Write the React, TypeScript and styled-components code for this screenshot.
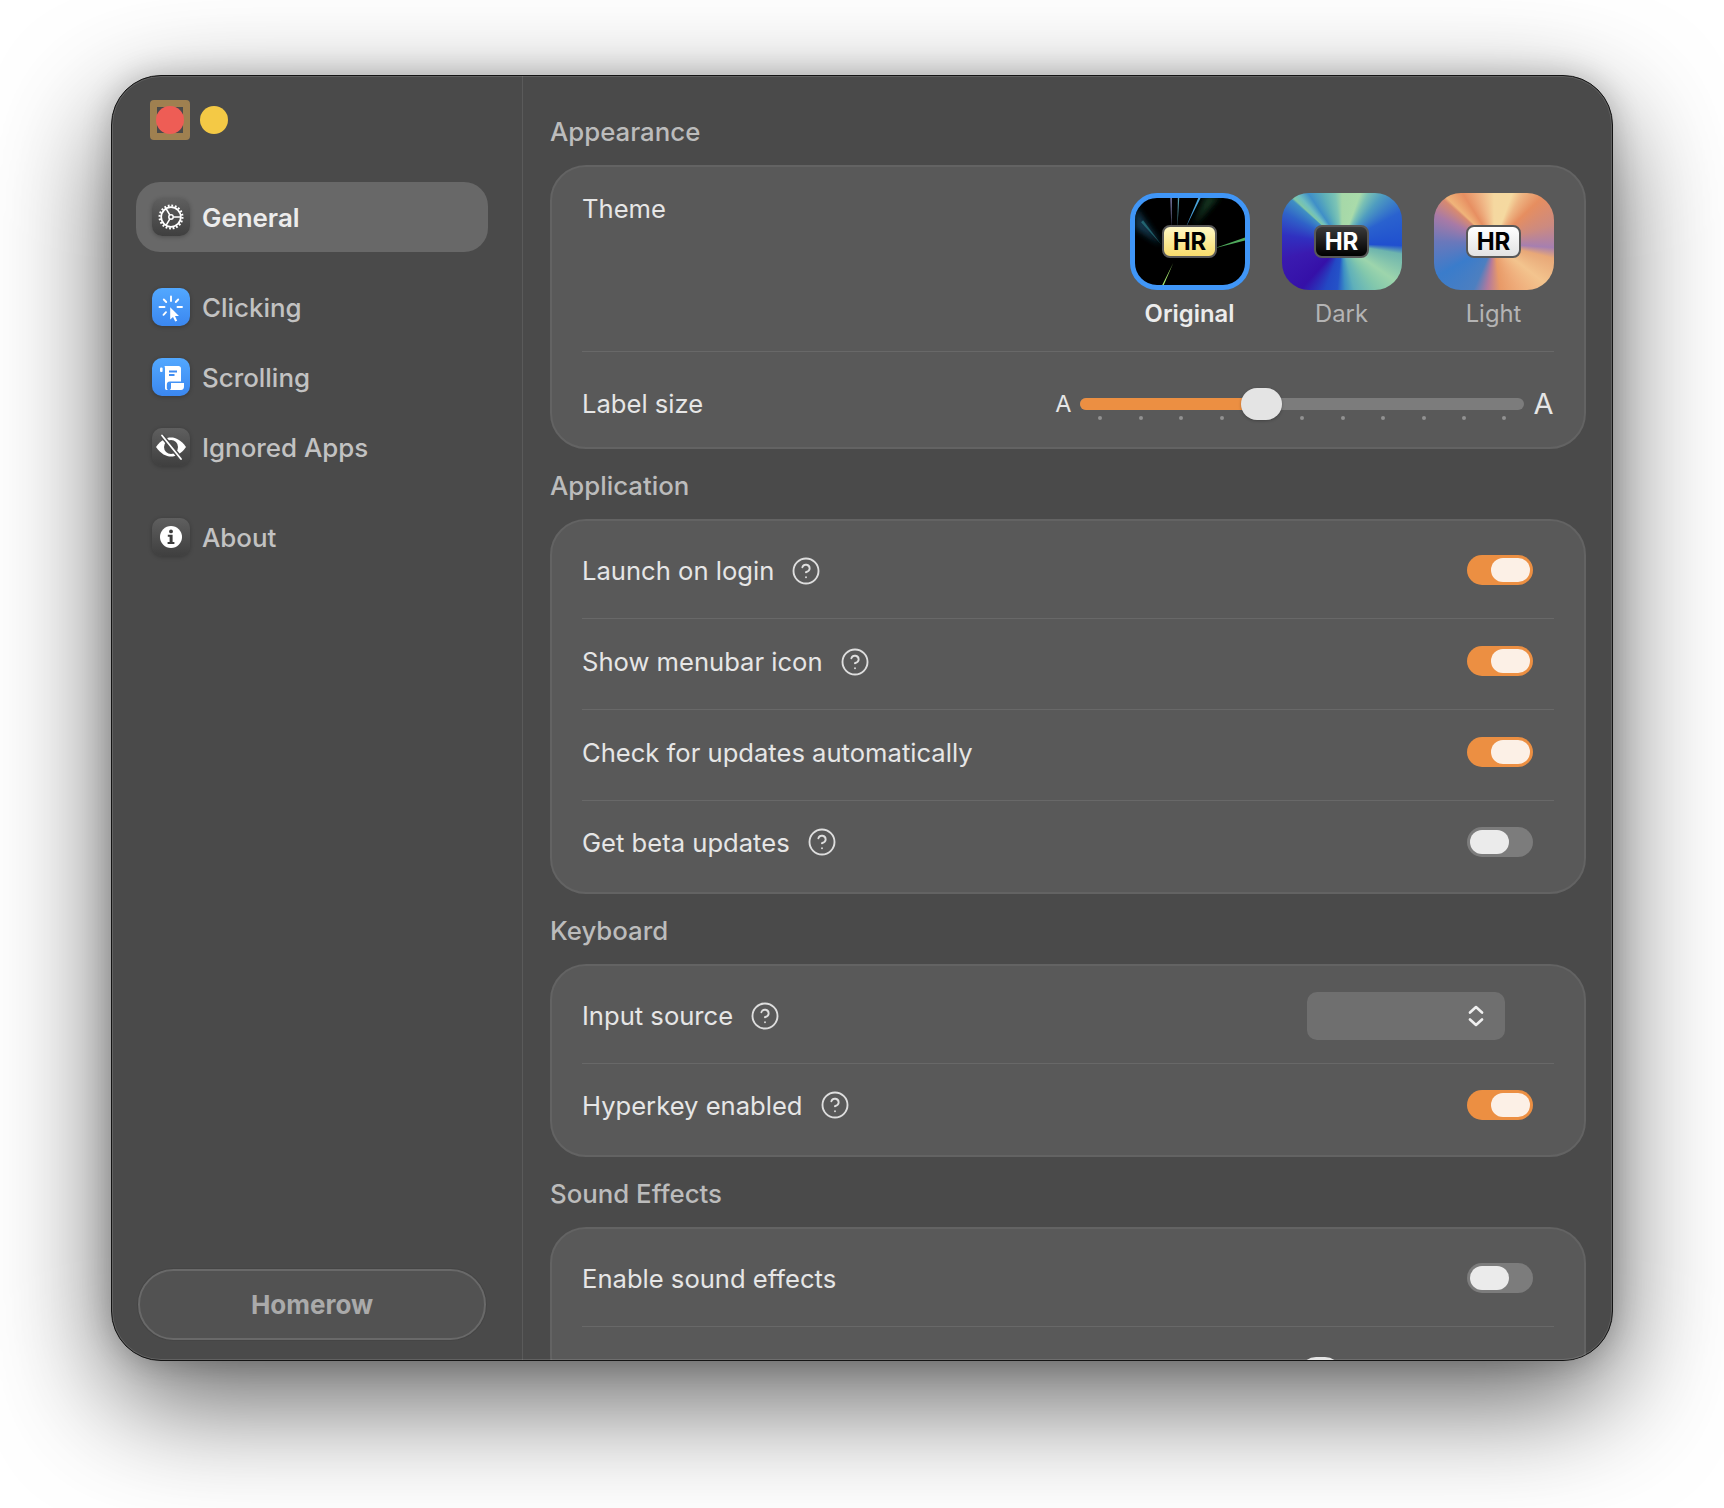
import React from "react";
import styled, { createGlobalStyle } from "styled-components";
import { CircleHelp } from "lucide-react";

const Global = createGlobalStyle`
  html, body { margin: 0; padding: 0; background: #fff; overflow: hidden; }
  body { font-family: Inter, "Liberation Sans", sans-serif; -webkit-font-smoothing: antialiased; }
`;

const Page = styled.div`
  width: 1724px;
  height: 1508px;
  box-sizing: border-box;
  padding: 75px 0 0 111px;
  background: #fff;
`;

const Window = styled.div`
  position: relative;
  width: 1502px;
  height: 1286px;
  box-sizing: border-box;
  display: flex;
  border: 1px solid #141414;
  border-radius: 50px;
  background: #4a4a4a;
  overflow: hidden;
  box-shadow: 0 40px 115px rgba(0, 0, 0, 0.62), 0 0 30px rgba(0, 0, 0, 0.2);
  &::after {
    content: "";
    position: absolute;
    inset: 0;
    border-radius: 49px;
    border: 1.5px solid rgba(255, 255, 255, 0.13);
    pointer-events: none;
  }
`;

const Sidebar = styled.aside`
  width: 411px;
  flex: none;
  box-sizing: border-box;
  padding: 24px 24px 20px;
  display: flex;
  flex-direction: column;
  border-right: 1.5px solid #5a5a5a;
`;

const Traffic = styled.div`
  display: flex;
  align-items: center;
  gap: 10px;
  padding-left: 14px;
  height: 40px;
  margin-bottom: 42px;
`;

const Highlight = styled.div`
  width: 40px;
  height: 40px;
  box-sizing: border-box;
  border: 7px solid #9f8050;
  border-radius: 4px;
  display: flex;
  align-items: center;
  justify-content: center;
`;

const Dot = styled.span<{ $color: string }>`
  width: 28px;
  height: 28px;
  flex: none;
  border-radius: 50%;
  background: ${(p) => p.$color};
`;

const Nav = styled.nav`
  display: flex;
  flex-direction: column;
  width: 352px;
`;

const NavItem = styled.div<{ $active?: boolean; $spaced?: boolean }>`
  height: 70px;
  box-sizing: border-box;
  padding-left: 16px;
  display: flex;
  align-items: center;
  gap: 12px;
  border-radius: 24px;
  margin-top: ${(p) => (p.$spaced ? "20px" : "0")};
  background: ${(p) => (p.$active ? "#686868" : "transparent")};
  color: ${(p) => (p.$active ? "#ececec" : "#c2c2c2")};
  font-size: 25.9px;
  font-weight: ${(p) => (p.$active ? 600 : 500)};
`;

const IconTile = styled.span<{ $blue?: boolean }>`
  width: 38px;
  height: 38px;
  flex: none;
  border-radius: 10px;
  background: ${(p) =>
    p.$blue ? "linear-gradient(#52a8ff, #3b87f0)" : "linear-gradient(#5f5f5f, #3f3f3f)"};
  box-shadow: 0 1px 4px rgba(0, 0, 0, 0.25);
  display: flex;
  svg { display: block; }
`;

const Homerow = styled.div`
  margin: auto 2px 0;
  height: 71px;
  width: 348px;
  box-sizing: border-box;
  border-radius: 36px;
  background: #525252;
  border: 2px solid #696969;
  box-shadow: 0 0 0 1px #454545;
  display: flex;
  align-items: center;
  justify-content: center;
  color: #aaaaaa;
  font-size: 26px;
  font-weight: 650;
`;

const Content = styled.main`
  flex: 1;
  min-width: 0;
  box-sizing: border-box;
  padding: 39px 26.5px 0 27px;
  display: flex;
  flex-direction: column;
`;

const SectionTitle = styled.h2`
  margin: 0 0 16px;
  height: 34px;
  line-height: 34px;
  font-size: 25.8px;
  font-weight: 500;
  color: #bcbcbc;
`;

const Card = styled.section`
  flex: none;
  box-sizing: border-box;
  margin-bottom: 20px;
  padding: 7px 30px 0;
  border: 2px solid #636363;
  border-radius: 36px;
  background: #595959;
`;

const ThemeRow = styled.div`
  display: flex;
  justify-content: space-between;
  align-items: flex-start;
  height: 178px;
  padding-top: 19px;
  box-sizing: border-box;
  border-bottom: 1.5px solid #686868;
`;

const Label = styled.span`
  color: #e6e6e6;
  font-size: 25.6px;
  font-weight: 400;
  white-space: nowrap;
`;

const ThemeLabel = styled(Label)`
  line-height: 32px;
`;

const Themes = styled.div`
  display: flex;
  gap: 32px;
`;

const ThemeOption = styled.div<{ $active?: boolean }>`
  width: 120px;
  display: flex;
  flex-direction: column;
  align-items: center;
  gap: 8px;
  color: ${(p) => (p.$active ? "#ececec" : "#b4b4b4")};
  font-size: 23.8px;
  font-weight: ${(p) => (p.$active ? 600 : 400)};
  line-height: 32px;
`;

const Thumb = styled.div<{ $variant: "original" | "dark" | "light" }>`
  position: relative;
  width: 120px;
  height: 97px;
  box-sizing: border-box;
  border-radius: 27px;
  overflow: hidden;
  display: flex;
  align-items: center;
  justify-content: center;
  ${(p) =>
    p.$variant === "original"
      ? `background:#000; border:5.5px solid #4096f7;`
      : p.$variant === "dark"
      ? `background: conic-gradient(from 0deg at 50% 52%,
          #a6d8a8 0deg, #a9dbaa 20deg, #79c0b5 28deg, #4f9dc0 40deg, #2a62cf 62deg, #2050cf 92deg,
          #6db4ae 100deg, #9dd5ac 125deg, #83c8ac 142deg, #5fb0ba 165deg, #3c8fc4 176deg, #2452c8 186deg,
          #2348c4 200deg, #3510a8 222deg, #3a1ab0 255deg, #3030c0 278deg, #2f62c8 298deg, #3f8fc4 311deg,
          #7fc7a8 313deg, #6ebec0 318deg, #3f8fc8 326deg, #5fb0b8 340deg, #7cc4b5 352deg, #a6d8a8 360deg);`
      : `background: conic-gradient(from 0deg at 50% 52%,
          #f5d8a0 0deg, #f5d9a0 20deg, #eeb583 30deg, #e68e60 46deg, #cc8a80 72deg, #a67fb0 94deg,
          #e8a878 104deg, #f3c48e 128deg, #efae7c 150deg, #e89a68 172deg, #b47a9c 188deg, #4d7fc0 204deg,
          #3a7ccb 240deg, #6a78bb 272deg, #a87aa6 296deg, #d88a70 311deg, #f0b47a 314deg, #e78f62 328deg,
          #f0b888 346deg, #f5d8a0 360deg);`}
`;

const Rays = styled.svg`
  position: absolute;
  inset: 0;
  width: 100%;
  height: 100%;
`;

const Badge = styled.span<{ $variant: "original" | "dark" | "light" }>`
  position: relative;
  width: 55px;
  height: 33px;
  box-sizing: border-box;
  border: 2px solid #585858;
  border-radius: 8px;
  display: flex;
  align-items: center;
  justify-content: center;
  font-size: 24px;
  font-weight: 700;
  line-height: 1;
  ${(p) =>
    p.$variant === "original"
      ? `background: linear-gradient(#fff8c4, #f8dc6c); color:#000;`
      : p.$variant === "dark"
      ? `background: linear-gradient(#3a3a3a, #000); color:#fff;`
      : `background: linear-gradient(#fff, #e2e2e2); color:#000;`}
`;

const SliderRow = styled.div`
  display: flex;
  align-items: center;
  justify-content: space-between;
  height: 95px;
  padding-top: 8px;
  box-sizing: border-box;
`;

const SliderWrap = styled.div`
  display: flex;
  align-items: center;
  gap: 9px;
  color: #e6e6e6;
`;

const SmallA = styled.span`
  font-size: 23.5px;
  font-weight: 400;
`;

const LargeA = styled.span`
  font-size: 29px;
  font-weight: 400;
`;

const Slider = styled.div`
  position: relative;
  width: 444px;
  height: 12px;
`;

const Track = styled.div`
  height: 12px;
  border-radius: 6px;
  background: #7c7c7c;
  overflow: hidden;
`;

const Fill = styled.div`
  height: 100%;
  background: #ec8f42;
`;

const Handle = styled.div`
  position: absolute;
  top: -10px;
  left: 161px;
  width: 41px;
  height: 32px;
  border-radius: 16px;
  background: #e4e4e4;
  box-shadow: 0 1px 3px rgba(0, 0, 0, 0.25);
`;

const Ticks = styled.div`
  position: absolute;
  top: 18px;
  left: 18px;
  right: 18px;
  display: flex;
  justify-content: space-between;
`;

const Tick = styled.i`
  width: 4px;
  height: 4px;
  border-radius: 50%;
  background: #929292;
`;

const Row = styled.div`
  display: flex;
  align-items: center;
  justify-content: space-between;
  height: 91px;
  box-sizing: border-box;
  padding-bottom: 5px;
  border-bottom: 1.5px solid #686868;
  &:last-child {
    border-bottom: none;
    padding-bottom: 9px;
  }
`;

const LabelGroup = styled.div`
  display: flex;
  align-items: center;
  gap: 17px;
  svg { display: block; color: #dedede; }
`;

const Switch = styled.div<{ $on?: boolean }>`
  width: 66px;
  height: 30px;
  margin: -2px 21px 0 0;
  box-sizing: border-box;
  padding: 3px;
  border-radius: 15px;
  display: flex;
  justify-content: ${(p) => (p.$on ? "flex-end" : "flex-start")};
  background: ${(p) => (p.$on ? "#ec8f42" : "#7c7c7c")};
  ${Row}:last-child & { margin-top: 0; }
`;

const Knob = styled.span<{ $on?: boolean }>`
  width: 39px;
  height: 24px;
  border-radius: 12px;
  background: ${(p) => (p.$on ? "#fcf0e6" : "#ebebeb")};
`;

const Select = styled.div`
  width: 198px;
  height: 48px;
  margin-right: 49px;
  box-sizing: border-box;
  padding-right: 20px;
  border-radius: 10px;
  background: #6f6f6f;
  display: flex;
  align-items: center;
  justify-content: flex-end;
`;

const HiddenSliderRow = styled.div`
  display: flex;
  justify-content: flex-end;
  padding: 30px 213px 0 0;
`;

const PeekHandle = styled.div`
  width: 41px;
  height: 32px;
  border-radius: 16px;
  background: #e4e4e4;
`;

const GearIcon = () => (
  <svg width="38" height="38" viewBox="0 0 38 38" fill="none" stroke="#fff">
    <circle cx="19" cy="19" r="9.8" strokeWidth="1.7" />
    <circle cx="19" cy="19" r="11.4" strokeWidth="2.2" strokeDasharray="1.8 1.78" />
    <circle cx="19" cy="19" r="2.2" strokeWidth="1.5" />
    <path d="M21.2 19H28.5M17.9 17.1L14.2 10.8M17.9 20.9L14.2 27.2" strokeWidth="1.6" />
  </svg>
);

const ClickIcon = () => (
  <svg width="38" height="38" viewBox="0 0 38 38" fill="none">
    <path
      d="M19 8.5V13M26.2 11.5L23.8 14M30 19H25.5M11.8 11.5L14.2 14M7.5 19H12.5M11.5 26.8L14 24.2"
      stroke="#fff"
      strokeWidth="1.9"
      strokeLinecap="round"
    />
    <path d="M18.2 19.2V31.6L21 28.9L23.2 33.6L25.2 32.7L23 28.1L27 28Z" fill="#fff" />
  </svg>
);

const ScrollIcon = () => (
  <svg width="38" height="38" viewBox="0 0 38 38" fill="none">
    <rect x="8" y="9.5" width="2.6" height="4.5" rx="1" fill="#fff" />
    <path
      d="M12.5 8H26.5C28 8 29 9 29 10.5V23.5H18C15.5 23.5 14.8 25 14.8 27V30C14.8 31 15.3 31.5 16 32H14.5C13.5 32 13 31 13 30V11C13 9.5 12.8 8.5 12.5 8Z"
      fill="#fff"
    />
    <path d="M17 13.5H25M17 17H22.5" stroke="#3f8cf2" strokeWidth="1.8" />
    <path d="M19 25H32V28.5C32 30.5 31 32 29 32H17.5C19 31.5 19 30 19 28.5Z" fill="#fff" />
  </svg>
);

const EyeOffIcon = () => (
  <svg width="38" height="38" viewBox="0 0 38 38" fill="none">
    <path d="M4 19C9 12 14 9.5 19 9.5S29 12 34 19C29 26 24 28.5 19 28.5S9 26 4 19Z" fill="#fff" />
    <circle cx="19" cy="19" r="7" fill="#4c4c4c" />
    <path d="M10 7.5L29 31" stroke="#4c4c4c" strokeWidth="4.6" />
    <path d="M10 7.5L29 31" stroke="#fff" strokeWidth="1.8" strokeLinecap="round" />
  </svg>
);

const InfoIcon = () => (
  <svg width="38" height="38" viewBox="0 0 38 38">
    <circle cx="19" cy="19" r="11" fill="#fff" />
    <circle cx="19" cy="13.4" r="1.9" fill="#3c3c3c" />
    <path d="M15.8 16.8H20.6V24H22.4V26H15.6V24H17.6V18.8H15.8Z" fill="#3c3c3c" />
  </svg>
);

const ChevronsIcon = () => (
  <svg width="18" height="24" viewBox="0 0 18 24" fill="none" stroke="#efefef" strokeWidth="2.6" strokeLinecap="round" strokeLinejoin="round">
    <path d="M3 8.5L9 3L15 8.5M3 15.5L9 21L15 15.5" />
  </svg>
);

const OriginalRays = () => (
  <Rays viewBox="0 0 109 86" preserveAspectRatio="none">
    <defs>
      <filter id="soft" x="-30%" y="-30%" width="160%" height="160%">
        <feGaussianBlur stdDeviation="0.5" />
      </filter>
      <filter id="softer" x="-50%" y="-50%" width="200%" height="200%">
        <feGaussianBlur stdDeviation="3" />
      </filter>
    </defs>
    <g filter="url(#softer)">
      <polygon points="26,46 0,8 0,30" fill="#17506e" opacity="0.7" />
      <polygon points="58,28 84,-2 70,-2" fill="#1c4a2c" opacity="0.75" />
    </g>
    <g filter="url(#soft)">
      <polygon points="26,46 8,22 6,24" fill="#3aa8b0" opacity="0.45" />
      <polygon points="36,30 36.5,-2 35,-2" fill="#9f9fd8" opacity="0.85" />
      <polygon points="42,30 44,-2 42.5,-2" fill="#5fa8b8" opacity="0.9" />
      <polygon points="50,30 66,-2 63.5,-2" fill="#4aa4dc" />
      <polygon points="78,50 109,42 109,39" fill="#4faa5c" />
      <polygon points="38,64 27,86 28.5,86" fill="#a6ea6e" />
    </g>
  </Rays>
);

const HelpIcon = () => <CircleHelp size={30} strokeWidth={1.5} />;

const Labelled = ({ text, help }: { text: string; help?: boolean }) => (
  <LabelGroup>
    <Label>{text}</Label>
    {help && <HelpIcon />}
  </LabelGroup>
);

const Toggle = ({ on }: { on?: boolean }) => (
  <Switch $on={on}>
    <Knob $on={on} />
  </Switch>
);

const themes = [
  { name: "Original", variant: "original" as const },
  { name: "Dark", variant: "dark" as const },
  { name: "Light", variant: "light" as const },
];

export default function App() {
  return (
    <Page>
      <Global />
      <Window>
        <Sidebar>
          <Traffic>
            <Highlight>
              <Dot $color="#ee5d55" />
            </Highlight>
            <Dot $color="#f4c945" />
          </Traffic>
          <Nav>
            <NavItem $active>
              <IconTile><GearIcon /></IconTile>
              General
            </NavItem>
            <NavItem $spaced>
              <IconTile $blue><ClickIcon /></IconTile>
              Clicking
            </NavItem>
            <NavItem>
              <IconTile $blue><ScrollIcon /></IconTile>
              Scrolling
            </NavItem>
            <NavItem>
              <IconTile><EyeOffIcon /></IconTile>
              Ignored Apps
            </NavItem>
            <NavItem $spaced>
              <IconTile><InfoIcon /></IconTile>
              About
            </NavItem>
          </Nav>
          <Homerow>Homerow</Homerow>
        </Sidebar>
        <Content>
          <SectionTitle>Appearance</SectionTitle>
          <Card>
            <ThemeRow>
              <ThemeLabel>Theme</ThemeLabel>
              <Themes>
                {themes.map((t) => (
                  <ThemeOption key={t.name} $active={t.variant === "original"}>
                    <Thumb $variant={t.variant}>
                      {t.variant === "original" && <OriginalRays />}
                      <Badge $variant={t.variant}>HR</Badge>
                    </Thumb>
                    {t.name}
                  </ThemeOption>
                ))}
              </Themes>
            </ThemeRow>
            <SliderRow>
              <Label>Label size</Label>
              <SliderWrap>
                <SmallA>A</SmallA>
                <Slider>
                  <Track>
                    <Fill style={{ width: "40%" }} />
                  </Track>
                  <Ticks>
                    {Array.from({ length: 11 }, (_, i) => (
                      <Tick key={i} />
                    ))}
                  </Ticks>
                  <Handle />
                </Slider>
                <LargeA>A</LargeA>
              </SliderWrap>
            </SliderRow>
          </Card>

          <SectionTitle>Application</SectionTitle>
          <Card>
            <Row><Labelled text="Launch on login" help /><Toggle on /></Row>
            <Row><Labelled text="Show menubar icon" help /><Toggle on /></Row>
            <Row><Labelled text="Check for updates automatically" /><Toggle on /></Row>
            <Row><Labelled text="Get beta updates" help /><Toggle /></Row>
          </Card>

          <SectionTitle>Keyboard</SectionTitle>
          <Card>
            <Row>
              <Labelled text="Input source" help />
              <Select><ChevronsIcon /></Select>
            </Row>
            <Row><Labelled text="Hyperkey enabled" help /><Toggle on /></Row>
          </Card>

          <SectionTitle>Sound Effects</SectionTitle>
          <Card>
            <Row><Labelled text="Enable sound effects" /><Toggle /></Row>
            <HiddenSliderRow><PeekHandle /></HiddenSliderRow>
          </Card>
        </Content>
      </Window>
    </Page>
  );
}
